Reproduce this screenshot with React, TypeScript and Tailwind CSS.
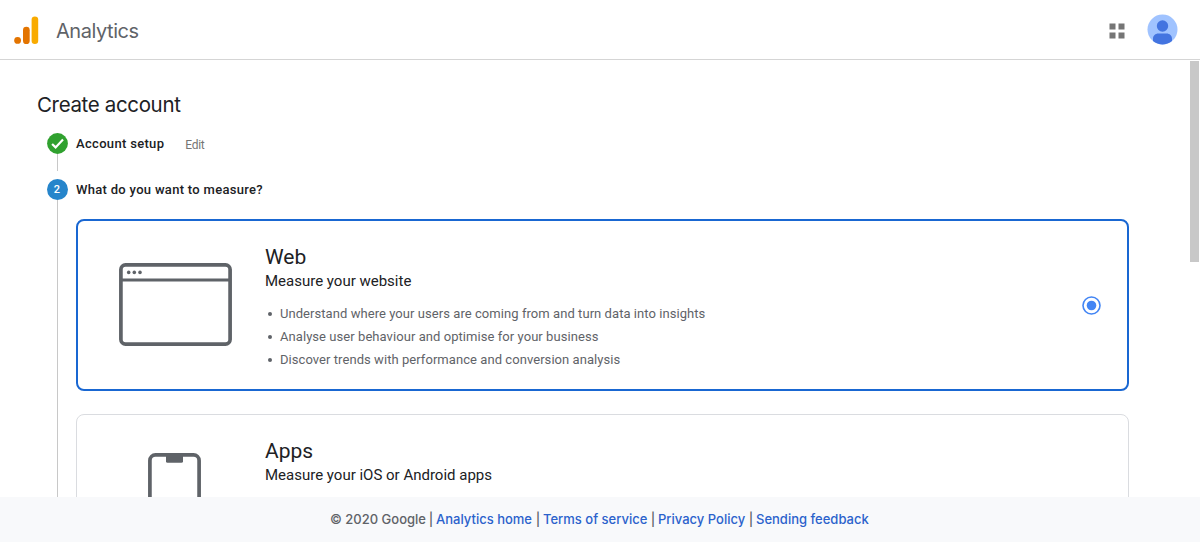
import type { ReactNode } from "react";

const footerLinks = ["Analytics home", "Terms of service", "Privacy Policy", "Sending feedback"];
const footerWidths = ["w-[97px]", "w-[105px]", "w-[88px]", "w-[114px]"];

const webPoints = [
  "Understand where your users are coming from and turn data into insights",
  "Analyse user behaviour and optimise for your business",
  "Discover trends with performance and conversion analysis",
];

function Header() {
  return (
    <header className="flex h-[60px] shrink-0 items-center border-b border-[#d5d5d5] bg-white pl-[14px] pr-[22px]">
      <svg width="25" height="29" viewBox="0 0 25 29" className="mt-px shrink-0">
        <circle cx="3.6" cy="24.4" r="3.4" fill="#e37400" />
        <rect x="9" y="10.8" width="6.7" height="17.2" rx="3.35" fill="#e37400" />
        <rect x="17.6" y="0.4" width="6.6" height="27.6" rx="3.3" fill="#f9ab00" />
      </svg>
      <span className="ml-[17px] mt-[2px] font-[Inter,sans-serif] text-[20px] leading-[28px] tracking-[-0.45px] text-[#5f6368]">
        Analytics
      </span>
      <div className="ml-auto flex items-center gap-[22px]">
        <svg width="16" height="16" viewBox="0 0 16 16" fill="#757575" className="mt-[2px]">
          <rect x="0.5" y="0.5" width="6" height="6" />
          <rect x="9.5" y="0.5" width="6" height="6" />
          <rect x="0.5" y="9.5" width="6" height="6" />
          <rect x="9.5" y="9.5" width="6" height="6" />
        </svg>
        <svg width="31" height="31" viewBox="0 0 31 31">
          <circle cx="15.5" cy="15.5" r="15" fill="#a0c3ff" />
          <circle cx="15.5" cy="12" r="5.7" fill="#4374e0" />
          <path d="M6 27.1v-2.3c0-3.1 2.3-5.2 5.4-5.2h8.2c3.1 0 5.4 2.1 5.4 5.2v2.3a15 15 0 0 1-19 0z" fill="#4374e0" />
        </svg>
      </div>
    </header>
  );
}

function BrowserIcon() {
  return (
    <svg width="113" height="83" viewBox="0 0 113 83">
      <rect x="1.9" y="1.9" width="109.2" height="79.2" rx="4.6" fill="none" stroke="#5f6368" strokeWidth="3.7" />
      <path d="M2 17h109" stroke="#5f6368" strokeWidth="3.2" />
      <circle cx="9.7" cy="9.4" r="1.8" fill="#5f6368" />
      <circle cx="15.3" cy="9.4" r="1.8" fill="#5f6368" />
      <circle cx="21" cy="9.4" r="1.8" fill="#5f6368" />
    </svg>
  );
}

function PhoneIcon() {
  return (
    <svg width="53" height="100" viewBox="0 0 53 100">
      <rect x="1.9" y="1.9" width="49.2" height="96" rx="5.6" fill="none" stroke="#5f6368" strokeWidth="3.7" />
      <path d="M18 2h17v6.2a1.6 1.6 0 0 1-1.6 1.6H19.6A1.6 1.6 0 0 1 18 8.2z" fill="#5f6368" />
    </svg>
  );
}

function Radio() {
  return (
    <svg width="19" height="19" viewBox="0 0 19 19" className="shrink-0">
      <circle cx="9.5" cy="9.5" r="8.5" fill="none" stroke="#4285f4" strokeWidth="1.6" />
      <circle cx="9.5" cy="9.5" r="4.8" fill="#4285f4" />
    </svg>
  );
}

function Title({ children }: { children: ReactNode }) {
  return <h2 className="text-[21px] leading-[28px] font-normal text-[#202124]">{children}</h2>;
}

export default function App() {
  return (
    <div className="flex h-[542px] w-full flex-col overflow-hidden bg-white font-[Roboto,sans-serif] text-[#202124]">
      <Header />

      <div className="flex min-h-0 flex-1 overflow-hidden">
        <main className="min-w-0 flex-1 pl-[37px] pt-[31px]">
          <h1 className="font-[Inter,sans-serif] text-[20.5px] leading-[28px] font-normal tracking-[-0.35px]">
            Create account
          </h1>

          <div className="mt-[14px] flex pl-[10px]">
            {/* Stepper rail */}
            <div className="flex w-[20px] shrink-0 flex-col items-center">
              <svg width="21" height="21" viewBox="0 0 21 21" className="shrink-0">
                <circle cx="10.5" cy="10.5" r="10.4" fill="#30a12f" />
                <path d="M5.1 11l3.5 3.4 7.4-7.8" fill="none" stroke="#fff" strokeWidth="2.2" />
              </svg>
              <div className="h-[17px] w-px bg-[#c8c8c8]" />
              <div className="mt-[8px] flex size-[21px] shrink-0 items-center justify-center rounded-full bg-[#2685cb] text-[11px] leading-none font-medium text-white">
                2
              </div>
              <div className="w-px flex-1 bg-[#c8c8c8]" />
            </div>

            <div className="ml-[9px] w-[1053px]">
              <div className="flex h-[21px] items-center">
                <span className="text-[13px] font-medium tracking-[0.32px]">Account setup</span>
                <span className="ml-[21px] mt-[2px] text-[12px] tracking-[-0.3px] text-[#757575]">Edit</span>
              </div>
              <div className="mt-[25px] flex h-[21px] items-center text-[13px] font-medium tracking-[0.3px]">
                What do you want to measure?
              </div>

              <div className="mt-[19px] flex h-[172px] rounded-[8px] border-2 border-[#1967d2] pr-[26px]">
                <div className="flex w-[187px] pl-[41px] pt-[42px]">
                  <BrowserIcon />
                </div>
                <div className="flex-1 pt-[22px]">
                  <Title>Web</Title>
                  <p className="text-[15px] leading-[21px]">Measure your website</p>
                  <ul className="mt-[10px] text-[13px] leading-[23px] tracking-[0.06px] text-[#5f6368]">
                    {webPoints.map((point) => (
                      <li key={point} className="flex items-center">
                        <span className="ml-[3px] mr-[8px] size-[4px] rounded-full bg-[#5f6368]" />
                        {point}
                      </li>
                    ))}
                  </ul>
                </div>
                <div className="flex items-center">
                  <Radio />
                </div>
              </div>

              <div className="mt-[23px] flex h-[172px] rounded-[8px] border border-[#dadce0]">
                <div className="flex w-[188px] justify-center pl-[6px] pt-[38px]">
                  <PhoneIcon />
                </div>
                <div className="flex-1 pt-[22px]">
                  <Title>Apps</Title>
                  <p className="text-[15px] leading-[21px]">Measure your iOS or Android apps</p>
                </div>
              </div>
            </div>
          </div>
        </main>

        {/* Scrollbar thumb */}
        <div className="mr-[1px] mt-px h-[201px] w-[9px] shrink-0 bg-[#c8c8c8]" />
      </div>

      <footer className="flex h-[45px] shrink-0 items-center justify-center bg-[#f8f9fb] font-[Inter,sans-serif] text-[13px] font-medium text-[#5f6368]">
        <span className="w-[96px] whitespace-nowrap">© 2020 Google</span>
        {footerLinks.map((link, i) => (
          <span key={link} className="flex items-center">
            <span className="w-[10px] text-center">|</span>
            <a className={`${footerWidths[i]} whitespace-nowrap text-[#2b62cc]`}>{link}</a>
          </span>
        ))}
      </footer>
    </div>
  );
}
